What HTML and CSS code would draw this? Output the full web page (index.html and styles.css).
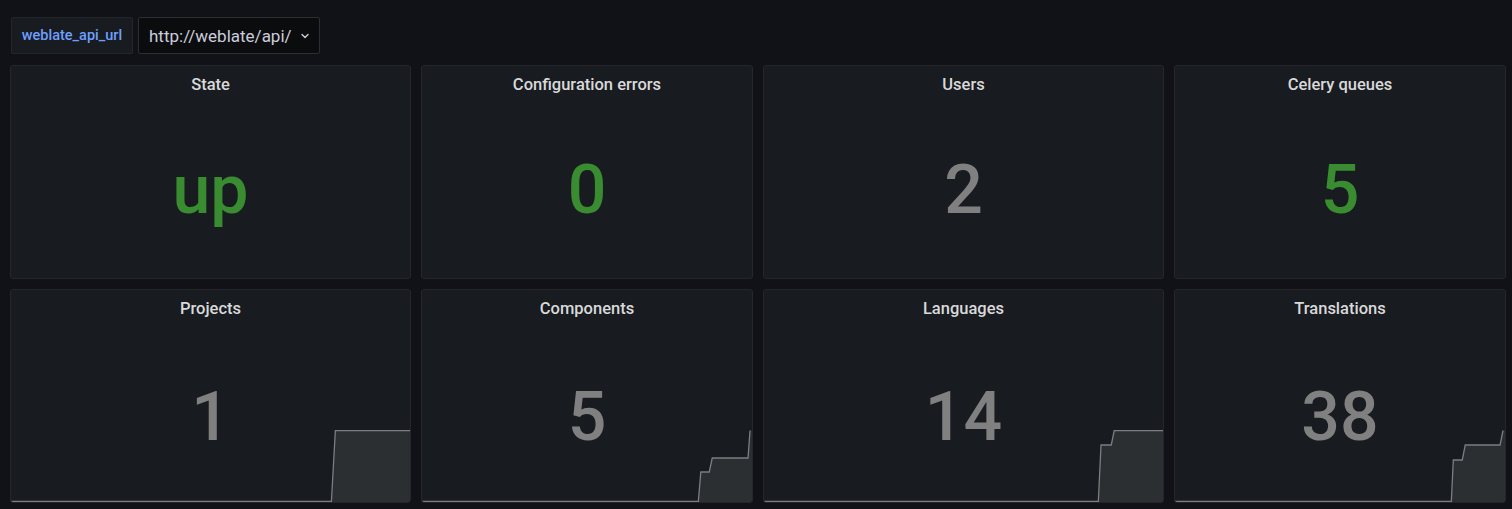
FILE: index.html
```html
<!DOCTYPE html>
<html>
<head>
<meta charset="utf-8">
<link rel="stylesheet" href="styles.css">
</head>
<body>
<div class="page">
  <div class="vars">
    <div class="var-label">weblate_api_url</div>
    <div class="var-value">http://weblate/api/
      <svg class="chev" width="10" height="10" viewBox="0 0 10 10"><path d="M2 3.5 L5 6.5 L8 3.5" fill="none" stroke="#ccccdc" stroke-width="1.4" stroke-linecap="round" stroke-linejoin="round"/></svg>
    </div>
  </div>
  <div class="grid">
    <div class="panel"><div class="title">State</div><div class="value green">up</div></div>
    <div class="panel"><div class="title">Configuration errors</div><div class="value green">0</div></div>
    <div class="panel"><div class="title">Users</div><div class="value gray">2</div></div>
    <div class="panel"><div class="title">Celery queues</div><div class="value green">5</div></div>

    <div class="panel">
      <svg class="spark" viewBox="0 0 401 72" preserveAspectRatio="none"><path class="fill" d="M0 71.5 L322 71.5 L326 0.5 L401 0.5 L401 72 L0 72 Z"/><path class="line" d="M0 71.5 L322 71.5 L326 0.5 L401 0.5"/></svg>
      <div class="title">Projects</div><div class="value gray spk">1</div>
    </div>
    <div class="panel">
      <svg class="spark" viewBox="0 0 332 72" preserveAspectRatio="none"><path class="fill" d="M0 71.5 L278 71.5 L280.5 42 L289 42 L292 28 L328 28 L330 0.5 L332 0.5 L332 72 L0 72 Z"/><path class="line" d="M0 71.5 L278 71.5 L280.5 42 L289 42 L292 28 L328 28 L330 0.5"/></svg>
      <div class="title">Components</div><div class="value gray spk">5</div>
    </div>
    <div class="panel">
      <svg class="spark" viewBox="0 0 401 72" preserveAspectRatio="none"><path class="fill" d="M0 71.5 L336 71.5 L338.7 15 L349 15 L352 0.5 L401 0.5 L401 72 L0 72 Z"/><path class="line" d="M0 71.5 L336 71.5 L338.7 15 L349 15 L352 0.5 L401 0.5"/></svg>
      <div class="title">Languages</div><div class="value gray spk">14</div>
    </div>
    <div class="panel">
      <svg class="spark" viewBox="0 0 332 72" preserveAspectRatio="none"><path class="fill" d="M0 71.5 L278 71.5 L280 30 L289 30 L292 15 L327 15 L330 0.5 L332 0.5 L332 72 L0 72 Z"/><path class="line" d="M0 71.5 L278 71.5 L280 30 L289 30 L292 15 L327 15 L330 0.5"/></svg>
      <div class="title">Translations</div><div class="value gray spk">38</div>
    </div>
  </div>
</div>
</body>
</html>
```

FILE: styles.css
```css
html, body {
  margin: 0;
  padding: 0;
  background: #111217;
  font-family: Roboto, "Liberation Sans", sans-serif;
  color: #ccccdc;
}
.page {
  padding: 17px 6px 0 10px;
}
.vars {
  display: flex;
  gap: 5px;
  height: 37px;
  margin-left: 1px;
}
.var-label {
  box-sizing: border-box;
  width: 122px;
  height: 37px;
  background: #181b1f;
  border: 1px solid #24262b;
  border-radius: 2px;
  color: #6e9fff;
  font-size: 14.5px;
  font-weight: 500;
  display: flex;
  align-items: center;
  justify-content: center;
}
.var-value {
  box-sizing: border-box;
  width: 182px;
  height: 37px;
  background: #0b0c0e;
  border: 1px solid #2c2e33;
  border-radius: 2px;
  color: #ccccdc;
  font-size: 17px;
  display: flex;
  align-items: center;
  padding-left: 10px;
  gap: 8px;
}
.chev { margin-top: 1px; }
.grid {
  margin-top: 11px;
  display: grid;
  grid-template-columns: 401px 332px 401px 332px;
  grid-template-rows: 214px 214px;
  column-gap: 10px;
  row-gap: 10px;
}
.panel {
  position: relative;
  box-sizing: border-box;
  background: #181b1f;
  border: 1px solid #24262b;
  border-radius: 3px;
  display: flex;
  flex-direction: column;
  overflow: hidden;
}
.title {
  position: relative;
  height: 38px;
  line-height: 38px;
  text-align: center;
  font-size: 16.5px;
  font-weight: 500;
  color: #d8d9da;
}
.value {
  position: relative;
  flex: 1;
  display: flex;
  align-items: center;
  justify-content: center;
  font-size: 68px;
  font-weight: 500;
  line-height: 1;
  padding-bottom: 2px;
}
.value.spk {
  padding-top: 4px;
  padding-bottom: 0;
}
.green { color: #3a8c31; }
.gray { color: #808080; }
.spark {
  position: absolute;
  left: 0;
  bottom: 0;
  width: 100%;
  height: 72px;
}
.spark .fill { fill: #2c2f32; stroke: none; }
.spark .line { fill: none; stroke: #7c7e82; stroke-width: 1.3; vector-effect: non-scaling-stroke; }
```
